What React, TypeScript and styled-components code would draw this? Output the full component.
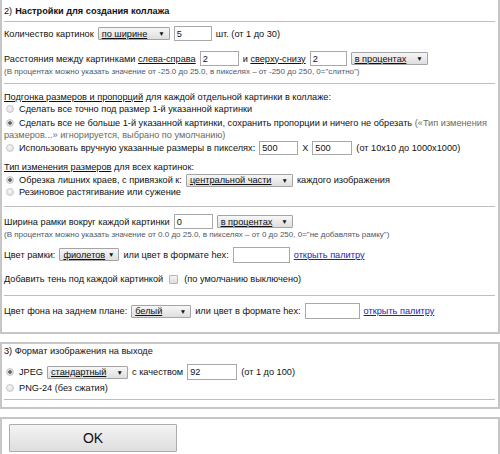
import styled, { createGlobalStyle } from 'styled-components';

const GlobalStyle = createGlobalStyle`
    html, body {
        margin: 0;
        padding: 0;
        background: #FFF;
        overflow: hidden;
    }

    body {
        font-family: "Liberation Sans", Arial, sans-serif;
        font-size: 9.2px;
        color: #111;
    }
`;

const Page = styled.div`
    width: 500px;
    display: flex;
    flex-direction: column;
    gap: 8px;
`;

const Panel = styled.section<{ $clipTop?: boolean; $pb?: number }>`
    border: 2px solid #c6c6c6;
    margin-top: ${p => (p.$clipTop ? '-2px' : '0')};
    padding: 0 2px ${p => p.$pb ?? 0}px 2px;
    display: flex;
    flex-direction: column;
    background: #FFF;
`;

const Title = styled.div<{ $h: number; $mt?: number }>`
    height: ${p => p.$h}px;
    margin-top: ${p => p.$mt ?? 0}px;
    display: flex;
    align-items: center;

    b {
        font-weight: bold;
        margin-left: 3px;
    }
`;

const Rule = styled.div<{ $mt?: number }>`
    height: 1px;
    background: #bdbdbd;
    margin: ${p => p.$mt ?? 0}px 1px 0 0;
`;

const Row = styled.div<{ $h: number; $mt?: number; $gap?: number }>`
    height: ${p => p.$h}px;
    margin-top: ${p => p.$mt ?? 0}px;
    display: flex;
    align-items: center;
    gap: ${p => p.$gap ?? 4}px;
    white-space: nowrap;
`;

const WrapOption = styled.div<{ $mt?: number }>`
    margin-top: ${p => p.$mt ?? 0}px;
    line-height: 12px;
    white-space: nowrap;
`;

const Aside = styled.span`
    color: #6e6a58;
`;

const NoteLine = styled.div<{ $h: number }>`
    height: ${p => p.$h}px;
    display: flex;
    align-items: center;
    font-size: 8px;
    color: #4f5866;
    white-space: nowrap;
`;

const Term = styled.span`
    text-decoration: underline;
`;

const Link = styled.a`
    color: #1a23b8;
    text-decoration: underline;
    cursor: pointer;
`;

const Radio = styled.span<{ $checked?: boolean; $inline?: boolean }>`
    display: inline-block;
    flex: none;
    width: 8px;
    height: 8px;
    box-sizing: border-box;
    border-radius: 50%;
    border: 1px solid #c8c8c8;
    background: ${p => (p.$checked
        ? 'radial-gradient(circle, #666 0 1.5px, #e0e0e0 2.1px)'
        : 'radial-gradient(circle at 40% 35%, #f6f6f6, #dadada)')};
    margin: 0 ${p => (p.$inline ? 5 : 1)}px 0 2px;
    vertical-align: -1px;
`;

const Checkbox = styled.span`
    display: inline-block;
    flex: none;
    width: 7px;
    height: 7px;
    border: 1px solid #b4b4b4;
    border-radius: 1px;
    background: linear-gradient(#f6f6f6, #dcdcdc);
    margin: 0 2px;
`;

const TextBox = styled.span<{ $w: number; $h?: number }>`
    display: inline-flex;
    align-items: center;
    flex: none;
    box-sizing: border-box;
    width: ${p => p.$w}px;
    height: ${p => p.$h ?? 15}px;
    border: 1px solid #a9a9a9;
    background: #FFF;
    padding-left: 2px;
    color: #111;
`;

const Select = styled.span<{ $w: number }>`
    display: inline-flex;
    align-items: center;
    justify-content: space-between;
    flex: none;
    box-sizing: border-box;
    width: ${p => p.$w}px;
    height: 13px;
    border: 1px solid #a4a4a4;
    border-radius: 1px;
    background: linear-gradient(#f7f7f7, #dedede);
    padding: 0 4px 0 3px;

    span {
        text-decoration: underline;
    }

    i {
        font-style: normal;
        font-size: 6.5px;
        color: #111;
    }
`;

const OkButton = styled.button`
    width: 168px;
    height: 28px;
    margin-top: 5px;
    margin-left: 5px;
    border: 1px solid #ababab;
    border-radius: 1px;
    background: linear-gradient(#f3f3f3, #dedede);
    font-family: "Liberation Sans", Arial, sans-serif;
    font-size: 14px;
    color: #111;
    padding: 0;
`;

const Dropdown = ({ w, label }: { w: number; label: string }) => (
    <Select $w={w}>
        <span>{label}</span>
        <i>▼</i>
    </Select>
);

const App = () => (
    <>
        <GlobalStyle />
        <Page>
            <Panel $clipTop $pb={13}>
                <Title $h={21}>
                    2)<b>Настройки для создания коллажа</b>
                </Title>
                <Rule />
                <Row $h={15} $mt={4}>
                    <span>Количество картинок</span>
                    <Dropdown w={72} label="по ширине" />
                    <TextBox $w={38}>5</TextBox>
                    <span>шт. (от 1 до 30)</span>
                </Row>
                <Row $h={15} $mt={10}>
                    <span>Расстояния между картинками <Term>слева-справа</Term></span>
                    <TextBox $w={39}>2</TextBox>
                    <span>и <Term>сверху-снизу</Term></span>
                    <TextBox $w={37}>2</TextBox>
                    <Dropdown w={77} label="в процентах" />
                </Row>
                <NoteLine $h={10}>
                    (В процентах можно указать значение от -25.0 до 25.0, в пикселях – от -250 до 250, 0="слитно")
                </NoteLine>
                <Rule $mt={7} />
                <Row $h={12} $mt={7}>
                    <span><Term>Подгонка размеров и пропорций</Term> для каждой отдельной картинки в коллаже:</span>
                </Row>
                <Row $h={12} $gap={4}>
                    <Radio />
                    <span>Сделать все точно под размер 1-й указанной картинки</span>
                </Row>
                <WrapOption $mt={2}>
                    <Radio $checked $inline />
                    Сделать все не больше 1-й указанной картинки, сохранить пропорции и ничего не обрезать{' '}
                    <Aside>(«Тип изменения</Aside>
                    <br />
                    <Aside>размеров...» игнорируется, выбрано по умолчанию)</Aside>
                </WrapOption>
                <Row $h={13}>
                    <Radio />
                    <span>Использовать вручную указанные размеры в пикселях:</span>
                    <TextBox $w={39} $h={14}>500</TextBox>
                    <span>X</span>
                    <TextBox $w={40} $h={14}>500</TextBox>
                    <span>(от 10x10 до 1000x1000)</span>
                </Row>
                <Row $h={12} $mt={7}>
                    <span><Term>Тип изменения размеров</Term> для всех картинок:</span>
                </Row>
                <Row $h={12} $mt={1}>
                    <Radio $checked />
                    <span>Обрезка лишних краев, с привязкой к:</span>
                    <Dropdown w={107} label="центральной части" />
                    <span>каждого изображения</span>
                </Row>
                <Row $h={12}>
                    <Radio />
                    <span>Резиновое растягивание или сужение</span>
                </Row>
                <Rule $mt={8} />
                <Row $h={15} $mt={7}>
                    <span>Ширина рамки вокруг каждой картинки</span>
                    <TextBox $w={39}>0</TextBox>
                    <Dropdown w={76} label="в процентах" />
                </Row>
                <NoteLine $h={10}>
                    (В процентах можно указать значение от 0.0 до 25.0, в пикселях – от 0 до 250, 0="не добавлять рамку")
                </NoteLine>
                <Row $h={15} $mt={8}>
                    <span>Цвет рамки:</span>
                    <Dropdown w={60} label="фиолетов" />
                    <span>или цвет в формате hex:</span>
                    <TextBox $w={57} $h={16} />
                    <Link>открыть палитру</Link>
                </Row>
                <Row $h={14} $mt={10}>
                    <span>Добавить тень под каждой картинкой</span>
                    <Checkbox />
                    <span>(по умолчанию выключено)</span>
                </Row>
                <Rule $mt={9} />
                <Row $h={16} $mt={7}>
                    <span>Цвет фона на заднем плане:</span>
                    <Dropdown w={60} label="белый" />
                    <span>или цвет в формате hex:</span>
                    <TextBox $w={55} $h={16} />
                    <Link>открыть палитру</Link>
                </Row>
            </Panel>
            <Panel $pb={7}>
                <Title $h={14}>
                    3) Формат изображения на выходе
                </Title>
                <Row $h={16} $mt={6}>
                    <Radio $checked />
                    <span>JPEG</span>
                    <Dropdown w={81} label="стандартный" />
                    <span>с качеством</span>
                    <TextBox $w={50} $h={16}>92</TextBox>
                    <span>(от 1 до 100)</span>
                </Row>
                <Row $h={12} $mt={2}>
                    <Radio />
                    <span>PNG-24 (без сжатия)</span>
                </Row>
                <Rule $mt={5} />
            </Panel>
            <Panel $pb={8}>
                <OkButton>OK</OkButton>
            </Panel>
        </Page>
    </>
);

export default App;
